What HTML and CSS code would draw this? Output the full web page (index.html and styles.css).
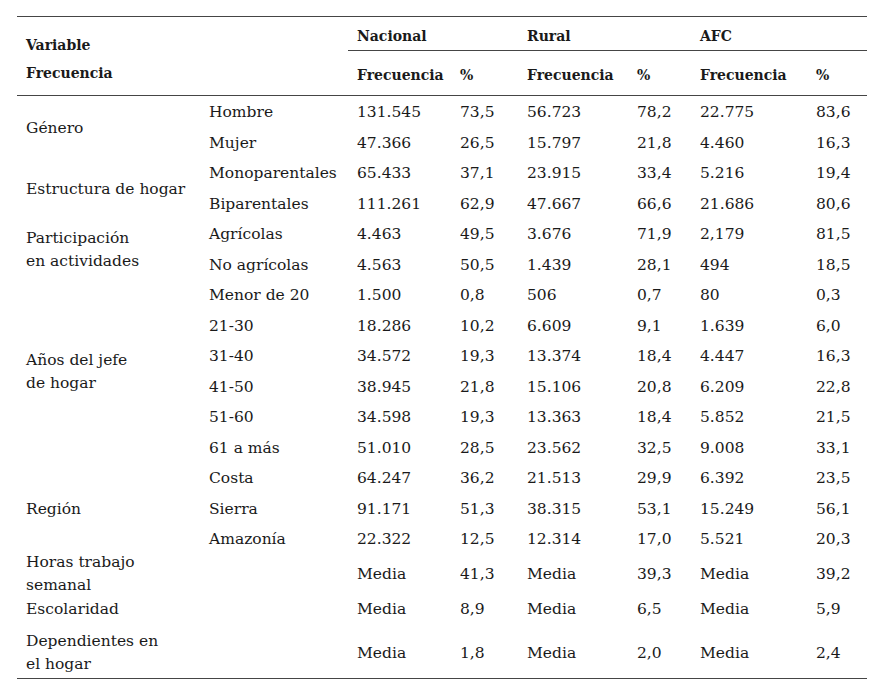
FILE: index.html
```html
<!DOCTYPE html>
<html lang="es">
<head>
<meta charset="utf-8">
<link rel="stylesheet" href="styles.css">
</head>
<body>
<table class="tbl">
  <colgroup>
    <col class="c1"><col class="c2"><col class="c3"><col class="c4"><col class="c5"><col class="c6"><col class="c7"><col class="c8">
  </colgroup>
  <thead>
    <tr class="h1">
      <th rowspan="2" class="var">Variable<br>Frecuencia</th>
      <th rowspan="2" class="var"></th>
      <th colspan="2" class="grp">Nacional</th>
      <th colspan="2" class="grp">Rural</th>
      <th colspan="2" class="grp">AFC</th>
    </tr>
    <tr class="h2">
      <th>Frecuencia</th><th>%</th>
      <th>Frecuencia</th><th>%</th>
      <th>Frecuencia</th><th>%</th>
    </tr>
  </thead>
  <tbody>
    <tr><td rowspan="2">Género</td><td>Hombre</td><td>131.545</td><td>73,5</td><td>56.723</td><td>78,2</td><td>22.775</td><td>83,6</td></tr>
    <tr><td>Mujer</td><td>47.366</td><td>26,5</td><td>15.797</td><td>21,8</td><td>4.460</td><td>16,3</td></tr>
    <tr><td rowspan="2">Estructura de hogar</td><td>Monoparentales</td><td>65.433</td><td>37,1</td><td>23.915</td><td>33,4</td><td>5.216</td><td>19,4</td></tr>
    <tr><td>Biparentales</td><td>111.261</td><td>62,9</td><td>47.667</td><td>66,6</td><td>21.686</td><td>80,6</td></tr>
    <tr><td rowspan="2" class="two">Participación<br>en actividades</td><td>Agrícolas</td><td>4.463</td><td>49,5</td><td>3.676</td><td>71,9</td><td>2,179</td><td>81,5</td></tr>
    <tr><td>No agrícolas</td><td>4.563</td><td>50,5</td><td>1.439</td><td>28,1</td><td>494</td><td>18,5</td></tr>
    <tr><td rowspan="6" class="two">Años del jefe<br>de hogar</td><td>Menor de 20</td><td>1.500</td><td>0,8</td><td>506</td><td>0,7</td><td>80</td><td>0,3</td></tr>
    <tr><td>21-30</td><td>18.286</td><td>10,2</td><td>6.609</td><td>9,1</td><td>1.639</td><td>6,0</td></tr>
    <tr><td>31-40</td><td>34.572</td><td>19,3</td><td>13.374</td><td>18,4</td><td>4.447</td><td>16,3</td></tr>
    <tr><td>41-50</td><td>38.945</td><td>21,8</td><td>15.106</td><td>20,8</td><td>6.209</td><td>22,8</td></tr>
    <tr><td>51-60</td><td>34.598</td><td>19,3</td><td>13.363</td><td>18,4</td><td>5.852</td><td>21,5</td></tr>
    <tr><td>61 a más</td><td>51.010</td><td>28,5</td><td>23.562</td><td>32,5</td><td>9.008</td><td>33,1</td></tr>
    <tr><td rowspan="3">Región</td><td>Costa</td><td>64.247</td><td>36,2</td><td>21.513</td><td>29,9</td><td>6.392</td><td>23,5</td></tr>
    <tr><td>Sierra</td><td>91.171</td><td>51,3</td><td>38.315</td><td>53,1</td><td>15.249</td><td>56,1</td></tr>
    <tr><td>Amazonía</td><td>22.322</td><td>12,5</td><td>12.314</td><td>17,0</td><td>5.521</td><td>20,3</td></tr>
    <tr class="r-horas"><td><div class="tight">Horas trabajo<br>semanal</div></td><td></td><td>Media</td><td>41,3</td><td>Media</td><td>39,3</td><td>Media</td><td>39,2</td></tr>
    <tr class="r-esc"><td>Escolaridad</td><td></td><td>Media</td><td>8,9</td><td>Media</td><td>6,5</td><td>Media</td><td>5,9</td></tr>
    <tr class="r-dep"><td><div class="pair">Dependientes en<br>el hogar</div></td><td></td><td>Media</td><td>1,8</td><td>Media</td><td>2,0</td><td>Media</td><td>2,4</td></tr>
  </tbody>
</table>
</body>
</html>
```

FILE: styles.css
```css
html, body {
  margin: 0;
  padding: 0;
  background: #ffffff;
}
body {
  font-family: "DejaVu Serif", "Liberation Serif", serif;
  font-size: 15.5px;
  color: #1a1a1a;
}
.tbl {
  margin: 16px 0 0 17px;
  width: 850px;
  border-collapse: collapse;
  table-layout: fixed;
  border-top: 1.5px solid #454545;
  border-bottom: 1.5px solid #454545;
}
.c1 { width: 183px; }
.c2 { width: 148px; }
.c3 { width: 103px; }
.c4 { width: 67px; }
.c5 { width: 110px; }
.c6 { width: 63px; }
.c7 { width: 116px; }
.c8 { width: 60px; }
th, td {
  text-align: left;
  padding: 0 0 0 9px;
  vertical-align: middle;
  white-space: nowrap;
  line-height: 22px;
}
th {
  font-weight: bold;
  font-size: 14px;
  vertical-align: top;
}
.h1 th.grp {
  height: 25px;
  padding-top: 7.5px;
  border-bottom: 1.5px solid #454545;
}
.h2 th {
  height: 31px;
  padding-top: 13.5px;
  border-bottom: 1.5px solid #454545;
}
th.var {
  line-height: 28px;
  padding-top: 13.5px;
  border-bottom: 1.5px solid #454545;
}
tbody td {
  height: 28.5px;
  padding-top: 2px;
}
.r-horas td { height: 37px; padding-top: 1px; }
.r-esc td { height: 31px; padding-top: 1px; }
.r-dep td { height: 50px; padding-top: 3px; }
td.two { line-height: 22.5px; }
.tight {
  line-height: 23px;
  margin: -4px 0;
}
.pair {
  line-height: 23px;
}
```
